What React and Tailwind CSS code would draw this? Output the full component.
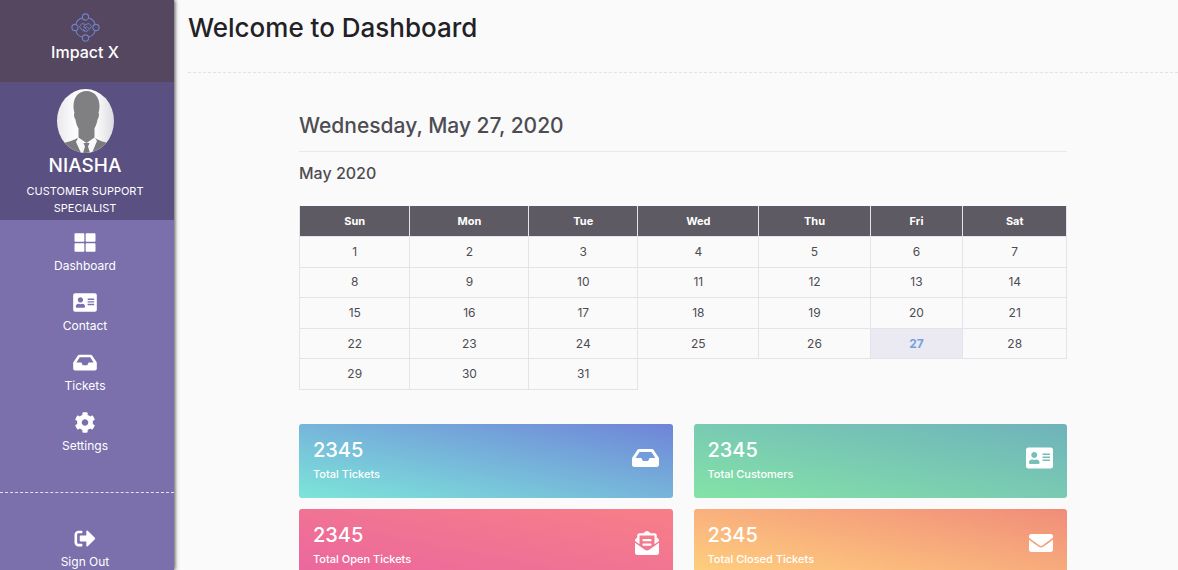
import React from "react";
import {
  FaAddressCard,
  FaCog,
  FaEnvelope,
  FaEnvelopeOpenText,
  FaInbox,
  FaSignOutAlt,
  FaThLarge,
} from "react-icons/fa";

const navItems = [
  { label: "Dashboard", Icon: FaThLarge },
  { label: "Contact", Icon: FaAddressCard },
  { label: "Tickets", Icon: FaInbox },
  { label: "Settings", Icon: FaCog },
];

const columns = [
  { day: "Sun", width: "w-[14.4%]" },
  { day: "Mon", width: "w-[15.5%]" },
  { day: "Tue", width: "w-[14.2%]" },
  { day: "Wed", width: "w-[15.8%]" },
  { day: "Thu", width: "w-[14.5%]" },
  { day: "Fri", width: "w-[12.1%]" },
  { day: "Sat", width: "w-[13.5%]" },
];

const DAYS_IN_MONTH = 31;
const TODAY = 27;

const weeks = [];
for (let start = 1; start <= DAYS_IN_MONTH; start += 7) {
  const week = [];
  for (let d = start; d < start + 7 && d <= DAYS_IN_MONTH; d++) week.push(d);
  weeks.push(week);
}

const stats = [
  { label: "Total Tickets", value: 2345, Icon: FaInbox, iconSize: "w-[27px]", bg: "bg-linear-to-tr from-[#7ce6d8] to-[#6f83d8]" },
  { label: "Total Customers", value: 2345, Icon: FaAddressCard, iconSize: "w-[27px]", bg: "bg-linear-to-tr from-[#84e3a6] to-[#6fb2bb]" },
  { label: "Total Open Tickets", value: 2345, Icon: FaEnvelopeOpenText, iconSize: "w-6", bg: "bg-linear-to-tr from-[#ea659f] to-[#f77f87]" },
  { label: "Total Closed Tickets", value: 2345, Icon: FaEnvelope, iconSize: "w-6", bg: "bg-linear-to-tr from-[#ffd47e] to-[#f08c79]" },
];

function Logo() {
  return (
    <svg viewBox="0 0 58 58" className="size-[29px] text-[#6f84cc]" fill="none" stroke="currentColor" strokeWidth="2.2" aria-hidden="true">
      <circle cx="29" cy="8" r="6.2" />
      <circle cx="29" cy="50" r="6.2" />
      <circle cx="8" cy="29" r="6.2" />
      <circle cx="50" cy="29" r="6.2" />
      <path d="M22 10C16 12 11 17 10 22M36 10C42 12 47 17 48 22M10 36C11 41 16 46 22 48M48 36C47 41 42 46 36 48" />
      <path
        strokeWidth="1.8"
        strokeLinejoin="round"
        d="M17 27L22 21L29 23L36 21L41 27L37 32L30 38L26 36L20 32ZM29 23L25 28L28 30L32 27L37 32M24 32L28 36M28 30L33 35"
      />
    </svg>
  );
}

function Avatar() {
  return (
    <svg viewBox="0 0 114 128" className="h-16 w-[57px]" role="img" aria-label="Profile photo">
      <defs>
        <linearGradient id="avatar-bg">
          <stop offset="0" stopColor="#e9e8ec" />
          <stop offset="0.3" stopColor="#fbfbfc" />
          <stop offset="0.7" stopColor="#fafafb" />
          <stop offset="1" stopColor="#dcdbe0" />
        </linearGradient>
        <clipPath id="avatar-clip">
          <ellipse cx="57" cy="64" rx="57" ry="64" />
        </clipPath>
      </defs>
      <g clipPath="url(#avatar-clip)">
        <rect width="114" height="128" fill="url(#avatar-bg)" />
        <path d="M0 114C12 107 30 105 41 98L57 128H0ZM114 114C102 107 86 105 76 98L57 128H114Z" fill="#7b7b7d" />
        <path d="M43 96L59 108L75 96L80 104L70 128H48L38 106Z" fill="#f8f8fa" />
        <path d="M53 108H65L62 115L66 128H52L56 115Z" fill="#7b7b7d" />
        <path d="M59 4C75 4 85 17 85 34C85 40 84 44 83 48C85 49 84 57 81 61C80 69 77 75 75 79V97L59 108L43 97V79C40 74 38 68 37 61C34 57 33 49 35 48C34 44 33 40 33 34C33 17 43 4 59 4Z" fill="#808082" />
      </g>
    </svg>
  );
}

function Sidebar() {
  return (
    <aside className="z-10 flex w-[174px] shrink-0 flex-col bg-[#7b70ac] text-white shadow-[1px_0_4px_rgba(0,0,0,0.7)]">
      <header className="flex h-[82px] shrink-0 flex-col items-center bg-[#54475f] pt-[13px] pr-1">
        <Logo />
        <span className="text-base leading-5 font-medium">Impact X</span>
      </header>
      <section className="flex h-[138px] shrink-0 flex-col items-center bg-[#5b5082] pt-[7px] pr-1 text-center">
        <Avatar />
        <h2 className="text-[19px] leading-[26px] font-medium">NIASHA</h2>
        <p className="mt-1 w-32 text-[11px] leading-[17px]">CUSTOMER SUPPORT SPECIALIST</p>
      </section>
      <nav className="flex flex-col pt-3 pb-5">
        {navItems.map(({ label, Icon }) => (
          <a key={label} href={"#" + label.toLowerCase()} className="flex h-[60px] flex-col items-center gap-[3px] pr-1">
            <Icon className="h-[21px] w-6" aria-hidden="true" />
            <span className="text-xs leading-5">{label}</span>
          </a>
        ))}
      </nav>
      <div className="border-t border-dashed border-white/80 pt-[35px]">
        <button type="button" className="flex w-full flex-col items-center gap-[3px] pr-1">
          <FaSignOutAlt className="h-[21px] w-6" aria-hidden="true" />
          <span className="text-xs leading-5">Sign Out</span>
        </button>
      </div>
    </aside>
  );
}

function Calendar() {
  return (
    <section className="text-[#4d4c52]">
      <h2 className="border-b border-[#e9e9ec] pb-[9px] text-[21px] leading-8 font-medium">Wednesday, May 27, 2020</h2>
      <h3 className="mt-[9px] text-base leading-6 font-medium">May 2020</h3>
      <table className="mt-[21px] h-[184px] w-full table-fixed border-collapse text-center text-xs leading-4">
        <thead>
          <tr className="bg-[#5e5a63] text-white">
            {columns.map(({ day, width }) => (
              <th key={day} scope="col" className={"border-x border-[#e4e3ea] py-[7px] text-[11px] font-bold " + width}>
                {day}
              </th>
            ))}
          </tr>
        </thead>
        <tbody>
          {weeks.map((week) => (
            <tr key={week[0]}>
              {week.map((d) => (
                <td
                  key={d}
                  className={
                    d === TODAY
                      ? "border border-[#e4e3ea] bg-[#ebe9f1] font-bold text-[#72a3dd]"
                      : "border border-[#e4e3ea]"
                  }
                >
                  {d}
                </td>
              ))}
            </tr>
          ))}
        </tbody>
      </table>
    </section>
  );
}

function StatCard({ label, value, Icon, iconSize, bg }) {
  return (
    <article className={"flex h-[74px] items-start justify-between rounded-[3px] px-3.5 pt-[13px] text-white " + bg}>
      <div>
        <p className="text-xl leading-[27px] font-medium">{value}</p>
        <p className="text-[11px] leading-5 font-medium">{label}</p>
      </div>
      <Icon className={"mt-[9px] h-6 " + iconSize} aria-hidden="true" />
    </article>
  );
}

export default function App() {
  return (
    <div className="flex h-screen overflow-hidden bg-[#fafafb] font-['Inter',sans-serif]">
      <Sidebar />
      <main className="min-w-0 flex-1 overflow-y-auto pb-8 pl-3.5 [scrollbar-width:none]">
        <h1 className="border-b border-dashed border-[#e2e2e5] pt-2 pb-6 text-[26px] leading-10 font-medium text-[#212126]">
          Welcome to Dashboard
        </h1>
        <div className="mx-auto w-4/5 px-3 pt-[37px]">
          <Calendar />
          <div className="mt-[34px] grid grid-cols-2 gap-x-[21px] gap-y-[11px]">
            {stats.map((s) => (
              <StatCard key={s.label} {...s} />
            ))}
          </div>
        </div>
      </main>
    </div>
  );
}
